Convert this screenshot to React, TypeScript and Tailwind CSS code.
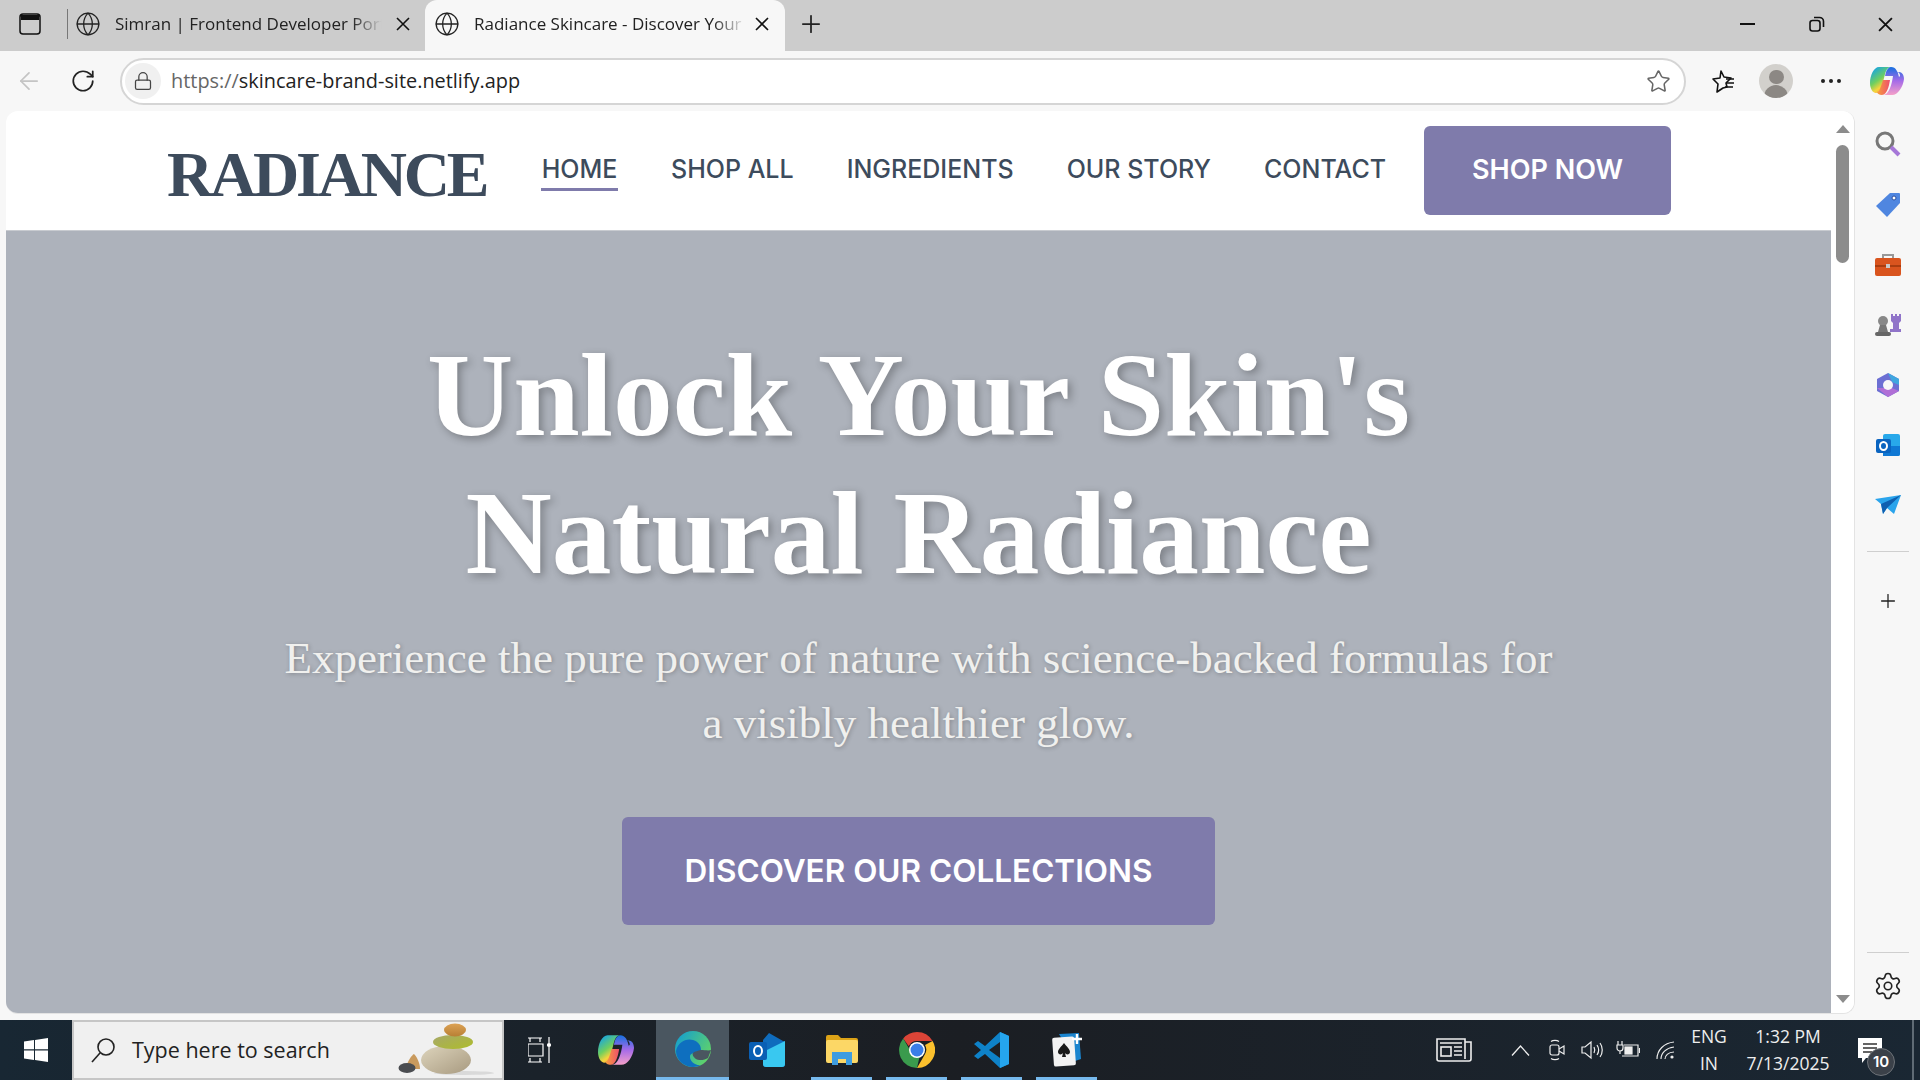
import { ArrowLeft, RotateCw, Lock, Globe, Plus, Star, Settings } from "lucide-react";

const chrome = "font-['Open_Sans',sans-serif]";
const site = "font-['Inter',sans-serif]";
const navLinks = ["SHOP ALL", "INGREDIENTS", "OUR STORY", "CONTACT"];

function GlobeIcon() {
  return <Globe className="w-[26px] h-[26px] text-[#222] shrink-0" strokeWidth={1.2} />;
}

function CloseIcon({ size = 14, width = 1.6 }: { size?: number; width?: number }) {
  return (
    <svg width={size} height={size} viewBox="0 0 14 14" fill="none" stroke="#111" strokeWidth={width} className="shrink-0">
      <path d="M1 1l12 12M13 1L1 13" />
    </svg>
  );
}

function CopilotIcon({ id, w, h }: { id: string; w: number; h: number }) {
  return (
    <svg width={w} height={h} viewBox="0 0 34 30">
      <defs>
        <linearGradient id={`${id}a`} x1="0.2" y1="0" x2="0.8" y2="1">
          <stop offset="0" stopColor="#12a3e8" />
          <stop offset="0.45" stopColor="#6fcf5f" />
          <stop offset="0.7" stopColor="#f7d43c" />
          <stop offset="1" stopColor="#f8913c" />
        </linearGradient>
        <linearGradient id={`${id}b`} x1="0.5" y1="0" x2="0.5" y2="1">
          <stop offset="0" stopColor="#1670e0" />
          <stop offset="0.5" stopColor="#a66be8" />
          <stop offset="1" stopColor="#f5a0c8" />
        </linearGradient>
        <linearGradient id={`${id}c`} x1="0" y1="0" x2="1" y2="0">
          <stop offset="0" stopColor="#f7a03c" />
          <stop offset="1" stopColor="#ee4f6c" />
        </linearGradient>
      </defs>
      <path d="M9 1h12c-3 0-5 3-6 7l-3 12c-1 4-3 7-6 7-3 0-6-4-6-10C0 9 4 1 9 1z" fill={`url(#${id}a)`} />
      <path d="M13 29h9c6 0 11-8 12-16 0-4-2-7-5-7h-2c2 0 3 2 3 4l-1 1c-1-5-3-10-8-10-2 0-4 2-5 5l-1 4h8c-1 8-4 19-10 19z" fill={`url(#${id}b)`} />
      <path d="M11 20l2-6h7c-1 6-3 15-8 15-3 0-5-2-5-3 2 0 3-3 4-6z" fill={`url(#${id}c)`} />
    </svg>
  );
}

function TabStrip() {
  return (
    <div className="h-[51px] bg-[#cccccc] flex items-center shrink-0 pb-[3px]">
      <div className="w-[60px] flex justify-center">
        <svg width="22" height="22" viewBox="0 0 22 22" fill="none">
          <rect x="1" y="1" width="20" height="20" rx="3" stroke="#111" strokeWidth="1.5" />
          <path d="M2 2h18v5H2z" fill="#111" />
        </svg>
      </div>
      <div className="w-px h-[30px] bg-[#777] ml-[7px]" />
      <div className="flex items-center pl-[7px] text-[#222]">
        <GlobeIcon />
        <span className={`${chrome} ml-[14px] w-[275px] whitespace-nowrap text-[17px] [mask-image:linear-gradient(to_right,black_86%,transparent_97%)]`}>Simran | Frontend Developer Port</span>
        <div className="ml-[6px]"><CloseIcon /></div>
      </div>
      <div className="w-[360px] self-stretch -mb-[3px] pb-[3px] bg-[#f7f7f7] rounded-t-[12px] flex items-center pl-[9px] text-[#222] ml-[15px]">
        <GlobeIcon />
        <span className={`${chrome} ml-[14px] w-[272px] whitespace-nowrap text-[17px] [mask-image:linear-gradient(to_right,black_88%,transparent)]`}>Radiance Skincare - Discover Your</span>
        <div className="ml-[9px]"><CloseIcon /></div>
      </div>
      <Plus className="w-7 h-7 ml-[12px] text-[#222]" strokeWidth={1.5} />
      <div className="ml-auto flex items-center mr-[27px]">
        <div className="w-[15px] h-[2px] bg-[#111]" />
        <svg width="16" height="16" viewBox="0 0 16 16" fill="none" className="ml-[54px]">
          <rect x="1" y="4.5" width="10" height="10.5" rx="2.5" stroke="#111" strokeWidth="1.6" />
          <path d="M5 1.5h5.5a4 4 0 0 1 4 4V11" stroke="#111" strokeWidth="1.6" />
        </svg>
        <div className="ml-[53px]"><CloseIcon size={15} width={1.7} /></div>
      </div>
    </div>
  );
}

function Toolbar() {
  return (
    <div className="h-[60px] bg-[#f7f7f7] flex items-center shrink-0">
      <ArrowLeft className="w-7 h-7 ml-[15px] text-[#c4c4c4]" strokeWidth={1.5} />
      <RotateCw className="w-[26px] h-[26px] ml-[27px] text-[#222]" strokeWidth={1.6} />
      <div className="ml-[24px] w-[1566px] h-[47px] bg-white border-2 border-[#d5d5d5] rounded-full flex items-center pl-[3px] shrink-0">
        <div className="w-[36px] h-[36px] rounded-full bg-[#f0f0f0] flex items-center justify-center">
          <Lock className="w-5 h-5 text-[#444]" strokeWidth={1.5} />
        </div>
        <span className={`${chrome} text-[19.9px] ml-[10px] text-[#222]`}>
          <span className="text-[#666]">https://</span>skincare-brand-site.netlify.app
        </span>
        <Star className="w-[25px] h-[25px] ml-auto mr-[13px] text-[#666]" strokeWidth={1.5} />
      </div>
      <svg width="26" height="26" viewBox="0 0 26 26" fill="none" className="ml-[23px] shrink-0">
        <path d="M12 3l3 6 7 1-5 5 1 4-4 1-6 4 1-8-5-5 7-1z" stroke="#111" strokeWidth="1.6" strokeLinejoin="round" />
        <path d="M17 11h8M18 15h7M16 19h8" stroke="#111" strokeWidth="1.4" />
      </svg>
      <div className="ml-[24px] w-[34px] h-[34px] rounded-full bg-[#d2d0cc] overflow-hidden flex flex-col items-center shrink-0">
        <div className="w-[15px] h-[15px] mt-[6px] rounded-full bg-[#8c8884]" />
        <div className="w-[24px] h-[14px] mt-[1px] rounded-t-full bg-[#8c8884]" />
      </div>
      <div className="ml-[28px] flex gap-[4px] shrink-0">
        <div className="w-1 h-1 rounded-full bg-[#222]" />
        <div className="w-1 h-1 rounded-full bg-[#222]" />
        <div className="w-1 h-1 rounded-full bg-[#222]" />
      </div>
      <div className="ml-[29px] shrink-0">
        <CopilotIcon id="tb" w={34} h={30} />
      </div>
    </div>
  );
}

function Navbar() {
  return (
    <header className="h-[120px] bg-white flex items-center pl-[161px] border-b border-[#c8cbd0] shrink-0">
      <span className="font-['Liberation_Serif',serif] font-bold text-[#3d4b5c] text-[64px] tracking-[-3.2px] leading-none mt-[9px] w-[319px] whitespace-nowrap">RADIANCE</span>
      <nav className={`${site} flex gap-[53px] ml-[55px] mt-[3px] text-[25px] font-medium text-[#3d4b5c] whitespace-nowrap`}>
        <a className="w-[77px] text-center border-b-[3px] border-[#7f7bab] pb-[3px] leading-[32px]">HOME</a>
        {navLinks.map((l) => (
          <a key={l} className="pb-[6px] leading-[32px]">{l}</a>
        ))}
      </nav>
      <button className={`${site} ml-auto mr-[160px] w-[247px] h-[89px] bg-[#7f7bab] rounded-[6px] text-white text-[27px] font-semibold`}>SHOP NOW</button>
    </header>
  );
}

function Hero() {
  return (
    <section className="flex-1 bg-[#adb2bb] flex flex-col items-center pt-[95px]">
      <h1 className="font-['Liberation_Serif',serif] font-bold text-white text-[119.5px] leading-[138px] text-center [text-shadow:3px_3px_8px_rgba(0,0,0,0.3)]">
        Unlock Your Skin's
        <br />
        Natural Radiance
      </h1>
      <p className="font-['Liberation_Serif',serif] text-[#f0f0ee] text-[45px] leading-[65px] text-center mt-[24px] w-[1400px] [text-shadow:1px_1px_4px_rgba(0,0,0,0.25)]">
        Experience the pure power of nature with science-backed formulas for
        <br />
        a visibly healthier glow.
      </p>
      <button className={`${site} mt-[61px] w-[593px] h-[108px] bg-[#7f7bab] rounded-[6px] text-white text-[31.5px] font-semibold`}>DISCOVER OUR COLLECTIONS</button>
    </section>
  );
}

function ScrollTrack() {
  return (
    <div className="w-[23px] bg-white flex flex-col items-center shrink-0">
      <div className="mt-[14px] w-0 h-0 border-x-[7px] border-x-transparent border-b-[8px] border-b-[#8c8c8c]" />
      <div className="mt-[12px] w-[13px] h-[118px] rounded-full bg-[#8c8c8c]" />
      <div className="mt-auto mb-[10px] w-0 h-0 border-x-[7px] border-x-transparent border-t-[8px] border-t-[#8c8c8c]" />
    </div>
  );
}

function Sidebar() {
  return (
    <aside className="w-[65px] bg-[#f7f7f7] flex flex-col items-center pt-[19px] shrink-0">
      <div className="h-[62px]">
        <svg width="28" height="28" viewBox="0 0 28 28" fill="none">
          <circle cx="11" cy="11" r="8" stroke="#777" strokeWidth="3" />
          <path d="M17 17l8 8" stroke="#a678d8" strokeWidth="4" />
        </svg>
      </div>
      <div className="h-[60px]">
        <svg width="26" height="26" viewBox="0 0 26 26">
          <path d="M15 1h9a1 1 0 0 1 1 1v9L12 25 1 14z" fill="#4f86e0" />
          <circle cx="19" cy="6" r="2" fill="#fff" stroke="#2c4f9e" />
        </svg>
      </div>
      <div className="h-[60px]">
        <svg width="28" height="26" viewBox="0 0 28 26">
          <path d="M9 6V3h10v3" fill="none" stroke="#999" strokeWidth="2" />
          <rect x="1" y="6" width="26" height="18" rx="2" fill="#d9541e" />
          <rect x="1" y="13" width="26" height="2" fill="#a93d10" />
          <rect x="12" y="12" width="4" height="4" fill="#c9c9c9" />
        </svg>
      </div>
      <div className="h-[60px]">
        <svg width="28" height="26" viewBox="0 0 28 26">
          <circle cx="9" cy="9" r="5" fill="#888" />
          <path d="M6 13h6l2 7H4z" fill="#777" />
          <rect x="1" y="20" width="16" height="4" rx="2" fill="#666" />
          <path d="M17 2h2v2h2V2h2v2h2V2h2v7l-2 2v6h2v3H16v-3h3v-6l-2-2z" fill="#9074c9" />
        </svg>
      </div>
      <div className="h-[60px]">
        <svg width="26" height="26" viewBox="0 0 26 26">
          <path d="M13 1l11 6v12l-11 6-11-6V7z" fill="#6c6fd3" />
          <path d="M13 1l11 6v6l-7-3z" fill="#3fa6df" />
          <path d="M2 16l11 9 11-6-7-3z" fill="#b06fd6" />
          <circle cx="13" cy="13" r="5" fill="#f7f7f7" />
        </svg>
      </div>
      <div className="h-[60px]">
        <svg width="26" height="26" viewBox="0 0 26 26">
          <rect x="8" y="2" width="17" height="22" rx="2" fill="#28a8ea" />
          <path d="M8 14h17v8a2 2 0 0 1-2 2H8z" fill="#0f78d4" />
          <rect x="1" y="7" width="15" height="14" rx="2" fill="#0a64c0" />
          <ellipse cx="8.5" cy="14" rx="3.5" ry="4" fill="none" stroke="#fff" strokeWidth="2" />
        </svg>
      </div>
      <div className="h-[48px] mt-[2px]">
        <svg width="26" height="22" viewBox="0 0 26 22">
          <path d="M0 5l26-4-7 19-7-6-4 6-2-10z" fill="#2aa4ec" />
          <path d="M6 10l20-9-14 13-4 6z" fill="#0f5fb0" />
        </svg>
      </div>
      <div className="w-[42px] h-px bg-[#cfcfcf] mt-[9px]" />
      <Plus className="w-[22px] h-[22px] mt-[38px] text-[#222]" strokeWidth={1.4} />
      <div className="w-[42px] h-px bg-[#cfcfcf] mt-auto" />
      <Settings className="w-[30px] h-[30px] mt-[18px] mb-[19px] text-[#222]" strokeWidth={1.3} />
    </aside>
  );
}

function WinLogo() {
  return (
    <svg width="24" height="24" viewBox="0 0 24 24" fill="#fff">
      <path d="M0 3.5l10-1.4V11.3H0zM11 2l13-2v11.3H11zM0 12.5h10v9.4L0 20.5zM11 12.5h13V24l-13-2z" />
    </svg>
  );
}

function Stones() {
  return (
    <svg width="96" height="54" viewBox="0 0 96 54" className="absolute right-[8px] bottom-[1px]">
      <defs>
        <linearGradient id="st1" x1="0" y1="0" x2="1" y2="1">
          <stop offset="0" stopColor="#ddd4bc" />
          <stop offset="1" stopColor="#a89a80" />
        </linearGradient>
        <linearGradient id="st2" x1="0" y1="0" x2="1" y2="1">
          <stop offset="0" stopColor="#a7a86a" />
          <stop offset="1" stopColor="#aebd2a" />
        </linearGradient>
        <linearGradient id="st3" x1="0" y1="0" x2="0" y2="1">
          <stop offset="0" stopColor="#dca255" />
          <stop offset="1" stopColor="#b87f34" />
        </linearGradient>
      </defs>
      <ellipse cx="66" cy="50" rx="30" ry="2" fill="#d9d9d9" />
      <path d="M8 46c1-8 6-14 8-15 3 3 6 9 6 15z" fill="#c99a5d" />
      <ellipse cx="9" cy="45" rx="8.5" ry="5" fill="#4a4c50" />
      <ellipse cx="48" cy="37" rx="25" ry="14" fill="url(#st1)" />
      <ellipse cx="55" cy="19" rx="20" ry="7" fill="url(#st2)" />
      <ellipse cx="57" cy="7" rx="11" ry="6.5" fill="url(#st3)" />
    </svg>
  );
}

function AppSlot({ children, open }: { children: React.ReactNode; open?: boolean }) {
  return (
    <div className="relative w-[75px] flex items-center justify-center">
      {children}
      {open && <div className="absolute bottom-0 left-[7px] right-[7px] h-[3px] bg-[#76b9ed]" />}
    </div>
  );
}

function Taskbar() {
  return (
    <footer className="h-[60px] bg-linear-to-r from-[#182733] via-[#1b1e23] to-[#1a2733] flex items-stretch shrink-0 text-white">
      <div className="w-[72px] flex items-center justify-center">
        <WinLogo />
      </div>
      <div className="w-[432px] bg-[#f0f0f0] border-2 border-[#c6c6c6] flex items-center relative">
        <svg width="26" height="26" viewBox="0 0 26 26" fill="none" stroke="#222" strokeWidth="1.6" className="ml-[16px]">
          <circle cx="16" cy="10" r="8" />
          <path d="M10 16L2 25" />
        </svg>
        <span className={`${chrome} text-[21.5px] text-[#222] ml-[16px]`}>Type here to search</span>
        <Stones />
      </div>
      <div className="w-[72px] flex items-center justify-center">
        <svg width="24" height="26" viewBox="0 0 24 26" fill="none" stroke="#fff" strokeWidth="1.2">
          <path d="M0 1h14M2 1v4M12 1v4M0 7h15v12H0zM0 25h14M2 25v-4M12 25v-4M21 0v6M21 10v16" />
          <circle cx="21" cy="8" r="1.5" fill="#fff" />
        </svg>
      </div>
      <div className="w-[80px] flex items-center justify-center">
        <CopilotIcon id="tk" w={36} h={32} />
      </div>
      <div className="w-[73px] bg-[#4a5660] border-b-[3px] border-[#76b9ed] flex items-center justify-center">
        <svg width="36" height="36" viewBox="0 0 36 36">
          <defs>
            <linearGradient id="eg" x1="0" y1="0" x2="1" y2="0.6">
              <stop offset="0" stopColor="#0f9bd7" />
              <stop offset="1" stopColor="#5fd26a" />
            </linearGradient>
          </defs>
          <circle cx="18" cy="18" r="18" fill="url(#eg)" />
          <path d="M1 20c2-9 10-13 17-11 6 2 8 6 8 10 0 2-2 3-6 3-3 0-5 1-5 4 0 4 5 9 11 8-2 1-5 2-8 2C9 36 1 29 1 20z" fill="#0e6fbf" />
          <path d="M26 19c3 0 8 1 10 0l-3 8c-3 2-9 3-12 1-3-2-4-5-3-6 2-2 5-2 8-3z" fill="#4a5660" />
        </svg>
      </div>
      <AppSlot>
        <svg width="36" height="34" viewBox="0 0 36 34">
          <path d="M20 0l14 8a2 2 0 0 1 2 2v21a3 3 0 0 1-3 3H17a3 3 0 0 1-3-3V7z" fill="#0f6cbd" />
          <path d="M14 19l22-11v23a3 3 0 0 1-3 3H17a3 3 0 0 1-3-3z" fill="#39c8f0" />
          <rect x="0" y="9" width="18" height="18" rx="2" fill="#0a5fb4" />
          <ellipse cx="9" cy="18" rx="4" ry="5" fill="none" stroke="#fff" strokeWidth="2" />
        </svg>
      </AppSlot>
      <AppSlot open>
        <svg width="32" height="30" viewBox="0 0 32 30">
          <path d="M0 2a2 2 0 0 1 2-2h10l3 3h15a2 2 0 0 1 2 2v3H0z" fill="#dca317" />
          <rect x="0" y="5" width="32" height="23" rx="2" fill="#fcd766" />
          <path d="M6 30v-13h20v13h-6v-6h-8v6z" fill="#3e9ce0" />
        </svg>
      </AppSlot>
      <AppSlot open>
        <svg width="36" height="36" viewBox="0 0 36 36">
          <path d="M18 0a18 18 0 0 1 15.6 9H18a9 9 0 0 0-8.2 5.2L4.2 6.5A18 18 0 0 1 18 0z" fill="#db4437" />
          <path d="M33.6 9A18 18 0 0 1 18 36l7.8-13.5A9 9 0 0 0 26 13z" fill="#fbc02d" />
          <path d="M18 36A18 18 0 0 1 4.2 6.5l7.6 13a9 9 0 0 0 9 4z" fill="#3a9b4d" />
          <circle cx="18" cy="18" r="8" fill="#fff" />
          <circle cx="18" cy="18" r="6.5" fill="#3b7ee8" />
        </svg>
      </AppSlot>
      <AppSlot open>
        <svg width="36" height="36" viewBox="0 0 36 36">
          <path d="M26 0l9 4v28l-9 4-15-14-7 5-4-3 7-6-7-6 4-3 7 5z" fill="#0e82c9" />
          <path d="M26 0l9 4v28l-9 4z" fill="#25a5ee" />
          <path d="M26 10L15 18l11 8z" fill="#1c2026" />
        </svg>
      </AppSlot>
      <AppSlot open>
        <svg width="32" height="36" viewBox="0 0 32 36">
          <path d="M8 2l20-1 2 26-6 2z" fill="#1b85cf" />
          <rect x="2" y="5" width="22" height="29" rx="2" fill="#f3f3f3" transform="rotate(-4 13 19)" />
          <path d="M13 11c3 4 6 6 6 9 0 3-4 3-5 1l1 4h-4l1-4c-1 2-5 2-5-1 0-3 3-5 6-9z" fill="#1a1a1a" />
          <path d="M26 2v10M21 7h10" stroke="#fff" strokeWidth="2.4" />
        </svg>
      </AppSlot>
      <div className="flex-1" />
      <div className="flex items-center">
        <svg width="36" height="24" viewBox="0 0 36 24" fill="none" stroke="#eee" strokeWidth="1.6">
          <path d="M29 4V1H1v20a2 2 0 0 0 2 2h30a2 2 0 0 0 2-2V4h-6v17" />
          <rect x="5" y="9" width="10" height="9" />
          <path d="M4 5h22M18 9h8M18 13h8M18 17h8" />
        </svg>
        <svg width="19" height="11" viewBox="0 0 19 11" fill="none" stroke="#eee" strokeWidth="1.3" className="ml-[39px]">
          <path d="M1 10.5l8.5-9.5 8.5 9.5" />
        </svg>
        <svg width="16" height="22" viewBox="0 0 16 22" fill="none" stroke="#eee" strokeWidth="1.2" className="ml-[19px]">
          <rect x="1" y="6" width="9" height="10" rx="2" />
          <path d="M10 10l5-3v8l-5-3M2 2.5C4 1 8 1 10 2.5M2 19.5c2 1.5 6 1.5 8 0" />
        </svg>
        <svg width="22" height="20" viewBox="0 0 22 20" fill="none" stroke="#eee" strokeWidth="1.2" className="ml-[16px]">
          <path d="M1 7h3l6-5v16l-6-5H1zM13 7c1 2 1 4 0 6M16 5c2 3 2 7 0 10M19 3c3 4 3 10 0 14" />
        </svg>
        <svg width="24" height="20" viewBox="0 0 24 20" fill="none" stroke="#eee" strokeWidth="1.2" className="ml-[13px]">
          <path d="M2 1v4M6 1v4M1 5h6v3a3 3 0 0 1-6 0zM4 11v3" />
          <path d="M8 5h14v11H6" />
          <rect x="9" y="7" width="7" height="7" fill="#eee" />
          <path d="M23.5 8v5" />
        </svg>
        <svg width="19" height="19" viewBox="0 0 19 19" fill="none" stroke="#eee" strokeWidth="1.1" className="ml-[16px]">
          <path d="M1 18C1 9 8 2 18 1M5 18c0-6 5-11 13-12M9 18c0-3 3-7 9-7" />
          <circle cx="16" cy="16" r="1.6" fill="#eee" stroke="none" />
        </svg>
      </div>
      <div className={`${chrome} ml-[12px] w-[44px] flex flex-col items-center justify-center text-[17.5px] leading-[27px] text-[#eee]`}>
        <span>ENG</span>
        <span>IN</span>
      </div>
      <div className={`${chrome} ml-[11px] w-[92px] flex flex-col items-center justify-center text-[17.5px] leading-[27px] text-[#eee] whitespace-nowrap`}>
        <span>1:32 PM</span>
        <span>7/13/2025</span>
      </div>
      <div className="ml-[24px] w-[38px] relative">
        <svg width="24" height="26" viewBox="0 0 24 26" className="absolute left-0 top-[18px]">
          <path d="M0 0h24v20H8l-4 5v-5H0z" fill="#fff" />
          <path d="M5 6h14M5 10h14M5 14h9" stroke="#333" strokeWidth="1.3" />
        </svg>
        <span className={`${site} absolute left-[9px] top-[28px] w-[28px] h-[28px] rounded-full bg-[#3b4149] border border-[#6d7278] text-[15px] font-semibold flex items-center justify-center`}>10</span>
      </div>
      <div className="ml-[16px] w-[2px] bg-[#5f6b75]" />
      <div className="w-[6px]" />
    </footer>
  );
}

export default function App() {
  return (
    <div className="w-[1920px] h-[1080px] flex flex-col overflow-hidden bg-[#f7f7f7]">
      <TabStrip />
      <Toolbar />
      <div className="flex-1 flex min-h-0 pl-[6px]">
        <div className="flex-1 flex mb-[6px] rounded-[12px] overflow-hidden border-r border-b border-[#e3e3e3]">
          <div className="flex-1 flex flex-col">
            <Navbar />
            <Hero />
          </div>
          <ScrollTrack />
        </div>
        <Sidebar />
      </div>
      <Taskbar />
    </div>
  );
}
